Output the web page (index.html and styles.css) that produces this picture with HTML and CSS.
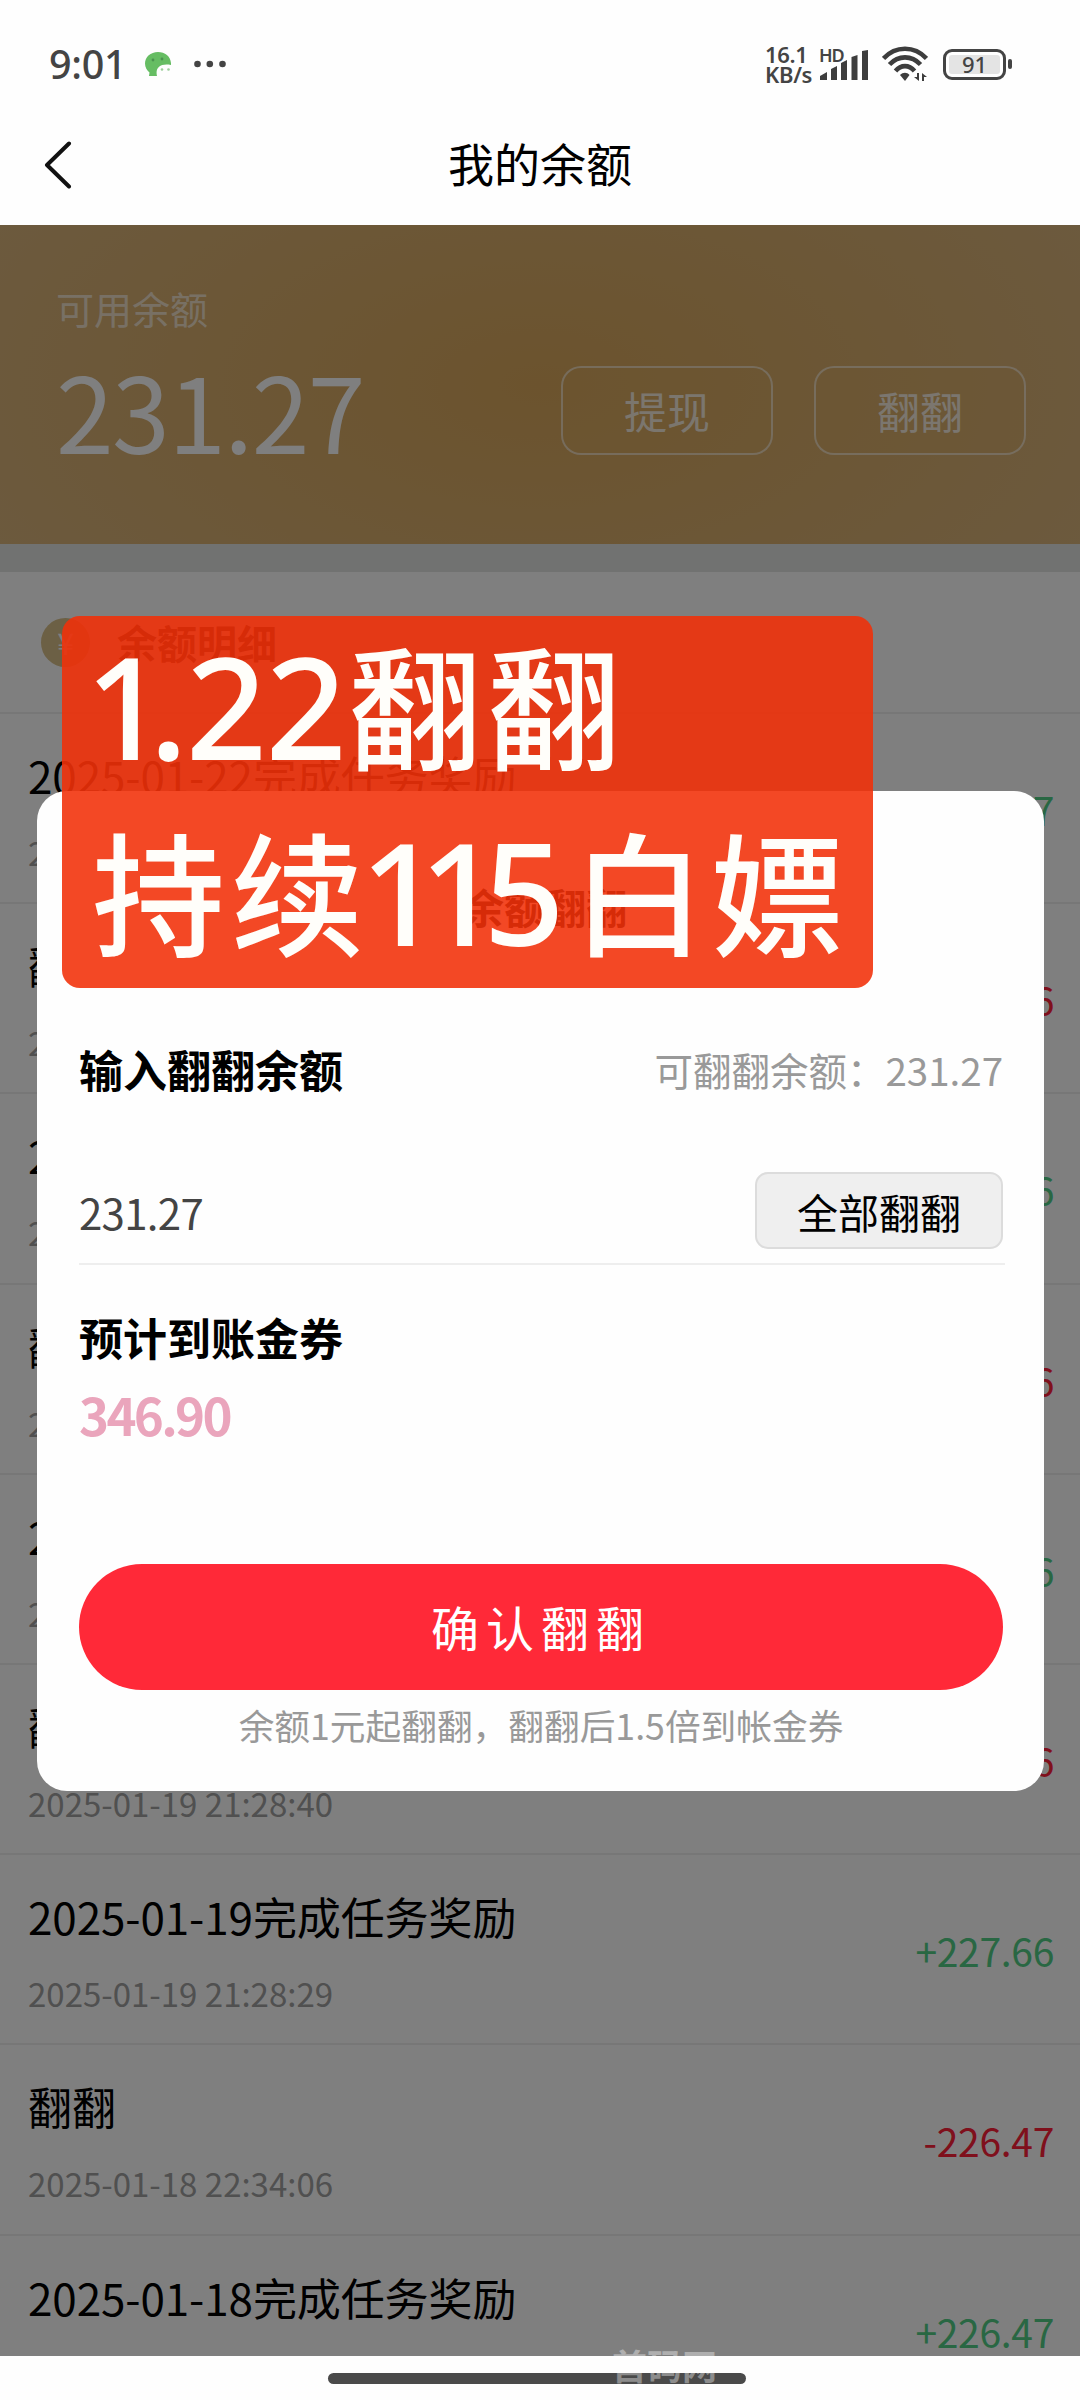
FILE: index.html
```html
<!DOCTYPE html>
<html lang="zh-CN">
<head>
<meta charset="utf-8">
<title>我的余额</title>
<link rel="stylesheet" href="styles.css">
</head>
<body>
<div class="phone">
  <div class="statusbar">
    <span class="clock">9:01</span>
    <svg class="chat" viewBox="0 0 26 24" width="26" height="24"><path d="M13 0C5.500 0 0 5 0 11.500c0 4 2 7 4.500 9L4 24h8c-2-8 3-13 14-11C26.500 5 20.500 0 13 0z" fill="#66bd63"/><circle cx="8" cy="8" r="1.400" fill="#4b9350"/><circle cx="17" cy="7" r="1.400" fill="#4b9350"/><circle cx="17" cy="17.500" r="1.300" fill="#9ccf9b"/><circle cx="23.500" cy="17.500" r="1.300" fill="#9ccf9b"/></svg>
    <svg class="dots" viewBox="0 0 32 8" width="32" height="8" fill="#444"><circle cx="3.500" cy="4" r="3.300"/><circle cx="15.800" cy="4" r="3.300"/><circle cx="28.500" cy="4" r="3.300"/></svg>
    <div class="status-right">
      <div class="speed"><span>16.1</span><span>KB/s</span></div>
      <div class="signal">
        <span class="hd">HD</span>
        <svg viewBox="0 0 50 32" width="50" height="32" fill="#3d3d3d"><path d="M1 30v-4l7-4v8zM12 30V19l6-3v14zM22 30V13l6-3v20zM32.500 30V7l6-2v25zM43 30V1l6-1v30z"/></svg>
      </div>
      <svg class="wifi" viewBox="0 0 46 36" width="46" height="36"><g fill="none" stroke="#3d3d3d" stroke-width="4.600"><path d="M1.500 12.500C13.500-.5 32.500-.5 44.500 12.500"/><path d="M7.500 18.500c9-9.500 22-9.500 31 0"/><path d="M13.500 25c5.500-6.500 13.500-6.500 19 0"/></g><path d="M18 29c3-3 7-3 9.500 0L23 35z" fill="#3d3d3d"/><path d="M37 27v8l-5-4h3v-4zM40 35v-8l5 4h-3v4z" fill="#3d3d3d"/></svg>
      <div class="battery"><span class="cell">91</span><span class="nub"></span></div>
    </div>
  </div>
  <div class="navbar">
    <svg viewBox="0 0 28 48" width="28" height="48"><path d="M25 2.500L3 24l22 21.500" fill="none" stroke="#111" stroke-width="4" stroke-linecap="round" stroke-linejoin="round"/></svg>
    <h1>我的余额</h1>
  </div>

  <main class="page">
    <section class="balance">
      <div class="figure"><span class="caption">可用余额</span><span class="total">231.27</span></div>
      <div class="actions"><span class="action">提现</span><span class="action">翻翻</span></div>
    </section>
    <section class="ledger">
      <div class="ledger-head"><span class="coin">¥</span><h2>余额明细</h2></div>
      <div class="row"><div><p class="name">2025-01-22完成任务奖励</p><p class="time">2025-01-22 09:00:16</p></div><span class="amount plus">+231.27</span></div>
      <div class="row"><div><p class="name">翻翻</p><p class="time">2025-01-21 21:30:08</p></div><span class="amount minus">-230.06</span></div>
      <div class="row"><div><p class="name">2025-01-21完成任务奖励</p><p class="time">2025-01-21 21:29:51</p></div><span class="amount plus">+230.06</span></div>
      <div class="row"><div><p class="name">翻翻</p><p class="time">2025-01-20 21:16:32</p></div><span class="amount minus">-228.86</span></div>
      <div class="row"><div><p class="name">2025-01-20完成任务奖励</p><p class="time">2025-01-20 21:16:20</p></div><span class="amount plus">+228.86</span></div>
      <div class="row"><div><p class="name">翻翻</p><p class="time">2025-01-19 21:28:40</p></div><span class="amount minus">-227.66</span></div>
      <div class="row"><div><p class="name">2025-01-19完成任务奖励</p><p class="time">2025-01-19 21:28:29</p></div><span class="amount plus">+227.66</span></div>
      <div class="row"><div><p class="name">翻翻</p><p class="time">2025-01-18 22:34:06</p></div><span class="amount minus">-226.47</span></div>
      <div class="row last"><div><p class="name">2025-01-18完成任务奖励</p></div><span class="amount plus">+226.47</span></div>
    </section>
    <div class="mask"></div>
    <div class="dialog">
      <h2 class="dialog-title">余额翻翻</h2>
      <div class="line head"><strong>输入翻翻余额</strong><span class="available">可翻翻余额：231.27</span></div>
      <div class="line field"><span class="value">231.27</span><span class="all">全部翻翻</span></div>
      <strong class="expect">预计到账金券</strong>
      <span class="result">346.90</span>
      <div class="confirm">确认翻翻</div>
      <p class="note">余额1元起翻翻，翻翻后1.5倍到帐金券</p>
    </div>
    <div class="sticker">
      <p><span class="num top"><i class="first">1</i><i class="dot">.</i>22</span>翻翻</p>
      <p>持续<span class="num bottom"><i class="one">1</i><i class="two">1</i>5</span>白嫖</p>
    </div>
  </main>

  <div class="homebar"><span class="pill"></span></div>
  <span class="watermark">首码网</span>
</div>
</body>
</html>
```

FILE: styles.css
```css
* { box-sizing: border-box; margin: 0; padding: 0; }
body {
  width: 1080px; height: 2400px; overflow: hidden; background: #fefefe;
  font-family: "Noto Sans CJK SC", sans-serif; color: #000;
}
.phone { position: relative; width: 1080px; height: 2400px; display: flex; flex-direction: column; overflow: hidden; }

/* status bar */
.statusbar { height: 128px; padding-left: 49px; padding-right: 68px; display: flex; align-items: center; font-family: "Noto Sans", sans-serif; color: #444; }
.clock { width: 96px; font-size: 39.500px; font-weight: 500; line-height: 56px; letter-spacing: -.3px; }
.dots { margin-left: 23px; }
.status-right { margin-left: auto; display: flex; align-items: center; }
.speed { width: 54px; display: flex; flex-direction: column; font-size: 22px; font-weight: 600; line-height: 20px; letter-spacing: -.3px; }
.signal { width: 52px; height: 36px; display: flex; align-items: flex-end; position: relative; }
.hd { position: absolute; left: 0; top: 0; font-size: 18px; font-weight: 600; line-height: 18px; letter-spacing: -1px; }
.wifi { margin-left: 11px; }
.battery { margin-left: 15px; display: flex; align-items: center; gap: 2px; }
.cell { width: 63px; height: 31px; border: 3px solid #444; border-radius: 9px; background: #e4e4e4; box-shadow: inset 0 0 0 3px #fff; font-size: 22px; line-height: 25px; font-weight: 500; text-align: center; }
.nub { width: 4px; height: 10px; border-radius: 2px; background: #444; }

.navbar { height: 97px; padding: 0 44px 23px; display: grid; grid-template-columns: 28px 1fr 28px; align-items: center; }
.navbar h1 { font-size: 46px; line-height: 60px; font-weight: 400; text-align: center; margin-top: -7px; }

/* page under the dialog */
.page { position: relative; height: 2131px; overflow: hidden; background: #fff; }
.balance {
  height: 319px; padding: 47px 54px 0 56px; display: flex; justify-content: space-between;
  background: radial-gradient(ellipse 620px 330px at 50% 50%, #d8a75c 0%, #d9ad6a 45%, #d9b47c 100%);
  color: #fff;
}
.figure { display: flex; flex-direction: column; }
.caption { font-size: 38px; line-height: 72px; color: rgba(255,255,255,.65); }
.total { font-size: 104px; line-height: 130px; margin-top: 0; letter-spacing: -1.600px; }
.actions { display: flex; gap: 41px; padding-top: 94px; }
.action { width: 212px; height: 89px; border: 2px solid rgba(255,255,255,.55); border-radius: 20px; font-size: 43px; line-height: 84px; text-align: center; color: rgba(255,255,255,.8); background: rgba(216,172,100,.3); }
.ledger { border-top: 28px solid #e3e4e2; }
.ledger-head { height: 142px; padding-left: 41px; border-bottom: 2px solid #eee; display: flex; align-items: center; gap: 27px; }
.coin { width: 49px; height: 49px; border-radius: 50%; background: #d8c08a; color: #fff; font-size: 30px; line-height: 48px; text-align: center; }
.ledger-head h2 { font-size: 40px; line-height: 60px; }
.row { height: 190.200px; padding: 31px 26px 0 28px; border-bottom: 2px solid #eee; display: flex; justify-content: space-between; }
.last { height: 150px; border-bottom: 0; }
.name { font-size: 44px; line-height: 60px; letter-spacing: -.1px; }
.time { margin-top: 25px; font-size: 33px; line-height: 44px; color: #a0a0a0; }
.amount { font-size: 39px; line-height: 128px; letter-spacing: -.3px; }
.plus { color: #52cf86; }
.minus { color: #ff2038; }
.mask { position: absolute; inset: 0; background: rgba(0,0,0,.5); }

/* exchange dialog */
.dialog { position: absolute; left: 37px; top: 566px; width: 1007px; height: 1000px; border-radius: 30px; background: #fefefe; padding: 85px 35px 0 42px; display: flex; flex-direction: column; }
.dialog > * { margin-right: 6px; }
.dialog-title { font-size: 41px; line-height: 60px; text-align: center; padding-left: 8px; }
.line { display: flex; justify-content: space-between; align-items: center; }
.head { margin-top: 98px; height: 70px; }
.head strong, .expect { font-size: 44px; line-height: 64px; }
.available { font-size: 38.500px; color: #999; margin-top: -1px; }
.dialog .field { margin-top: 69px; height: 92px; padding-bottom: 16px; border-bottom: 2px solid #eee; margin-right: 4px; padding-right: 2px; }
.value { font-size: 42px; line-height: 60px; color: #444; letter-spacing: -.7px; margin-top: 4px; }
.all { width: 248px; height: 77px; border: 2px solid #dcdcdc; border-radius: 13px; background: #efefef; font-size: 41px; line-height: 74px; text-align: center; }
.expect { margin-top: 40px; }
.result { margin-top: 9px; font-size: 51px; line-height: 72px; font-weight: 700; color: #eaa5bc; letter-spacing: -2.700px; }
.confirm { margin-top: 114px; height: 126px; border-radius: 63px; background: #ff2938; color: #fff; font-size: 48px; line-height: 125px; letter-spacing: 7px; text-align: center; }
.note { margin-top: 9px; font-size: 35.700px; line-height: 52px; color: #999; text-align: center; }

/* translucent caption label */
.sticker { position: absolute; left: 62px; top: 391px; width: 811px; height: 372px; border-radius: 18px; background: rgba(241,48,9,.885); padding: 0 30px; color: #fffefa; font-size: 133px; font-weight: 500; letter-spacing: 6px; white-space: nowrap; }
.sticker p { height: 186px; line-height: 172px; }
.sticker i { font-style: normal; }
.num { font-family: "Noto Sans", sans-serif; font-size: 142px; letter-spacing: -1.500px; }
.top { margin-left: -7px; margin-right: 3px; }
.bottom { margin-left: -10px; margin-right: 9px; }
.first { letter-spacing: -17px; }
.dot { letter-spacing: -2px; }
.one { letter-spacing: -22px; }
.two { letter-spacing: -17px; }

/* home indicator */
.homebar { flex: 1; display: flex; justify-content: center; padding-top: 17px; padding-right: 6px; background: #fefefe; }
.pill { width: 418px; height: 11px; border-radius: 6px; background: #4a4a4a; }
.watermark { position: absolute; left: 612px; top: 2339px; font-size: 35px; line-height: 52px; font-weight: 700; color: rgba(255,255,255,.38); }
```
